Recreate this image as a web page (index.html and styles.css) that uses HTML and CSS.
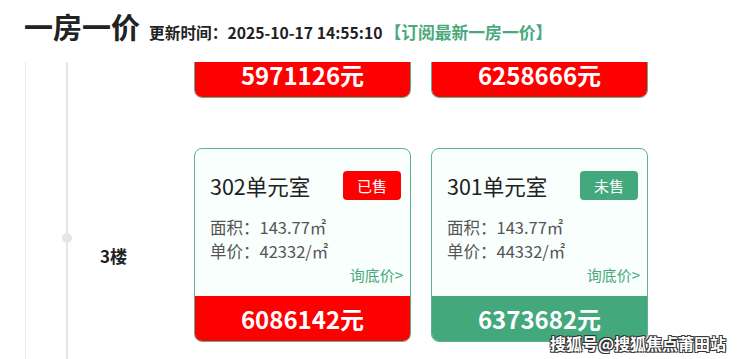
FILE: index.html
```html
<!DOCTYPE html>
<html>
<head>
  <meta charset="utf-8">
  <title>一房一价</title>
  <link rel="stylesheet" href="styles.css">
</head>
<body>
  <div class="head">
    <h1>一房一价</h1>
    <span class="time">更新时间：2025-10-17 14:55:10</span>
    <a class="sub" href="javascript:;">【订阅最新一房一价】</a>
  </div>
  <div class="view">
    <div class="floors">
      <div class="floor">
        <div class="side">
          <i class="dot"></i>
          <b class="label">4楼</b>
        </div>
        <div class="card">
          <div class="top">
            <span class="room">402单元室</span>
            <span class="tag sold">已售</span>
          </div>
          <p class="info">面积：143.77㎡</p>
          <p class="info">单价：41532/㎡</p>
          <a class="ask" href="javascript:;">询底价&gt;</a>
          <div class="price sold">5971126元</div>
        </div>
        <div class="card">
          <div class="top">
            <span class="room">401单元室</span>
            <span class="tag sold">已售</span>
          </div>
          <p class="info">面积：143.77㎡</p>
          <p class="info">单价：43532/㎡</p>
          <a class="ask" href="javascript:;">询底价&gt;</a>
          <div class="price sold">6258666元</div>
        </div>
      </div>
      <div class="floor">
        <div class="side">
          <i class="dot"></i>
          <b class="label">3楼</b>
        </div>
        <div class="card">
          <div class="top">
            <span class="room">302单元室</span>
            <span class="tag sold">已售</span>
          </div>
          <p class="info">面积：143.77㎡</p>
          <p class="info">单价：42332/㎡</p>
          <a class="ask" href="javascript:;">询底价&gt;</a>
          <div class="price sold">6086142元</div>
        </div>
        <div class="card">
          <div class="top">
            <span class="room">301单元室</span>
            <span class="tag">未售</span>
          </div>
          <p class="info">面积：143.77㎡</p>
          <p class="info">单价：44332/㎡</p>
          <a class="ask" href="javascript:;">询底价&gt;</a>
          <div class="price">6373682元</div>
        </div>
      </div>
    </div>
    <div class="mark">搜狐号@搜狐焦点莆田站</div>
  </div>
</body>
</html>
```
FILE: styles.css
```css
body{
  margin:0;
  font-family:"Noto Sans CJK SC","Noto Sans",sans-serif;
  color:#222;
  background:#fff;
}
a{
  text-decoration:none;
}
.head{
  height:62px;
  padding-left:24px;
  display:flex;
  align-items:baseline;
  box-sizing:border-box;
  padding-top:5px;
}
.head h1{
  margin:0;
  font-size:29px;
  font-weight:bold;
  line-height:42px;
}
.time{
  margin-left:9px;
  font-size:15.7px;
  font-weight:bold;
}
.sub{
  margin-left:2px;
  font-size:16.8px;
  font-weight:bold;
  color:#4aa97e;
}
.view{
  position:relative;
  height:297px;
  overflow:hidden;
}
.floors{
  margin-top:-158px;
  background:
    linear-gradient(#ebebeb,#ebebeb) 25px 0/1px 100% no-repeat,
    linear-gradient(#e6e6e6,#e6e6e6) 66px 0/2px 100% no-repeat;
}
.floor{
  display:flex;
  padding-bottom:50px;
}
.side{
  width:194px;
  padding-top:85px;
  display:flex;
  flex-direction:column;
  align-items:flex-start;
}
.dot{
  width:10px;
  height:10px;
  margin-left:62px;
  border-radius:5px;
  background:#e6e6e6;
}
.label{
  margin:1px 0 0 100px;
  font-size:17px;
  line-height:24px;
}
.card{
  width:217px;
  height:194px;
  margin-right:20px;
  box-sizing:border-box;
  border:1px solid #5cb38d;
  border-radius:8px;
  background:#f9fffd;
  overflow:hidden;
  display:flex;
  flex-direction:column;
}
.top{
  display:flex;
  justify-content:space-between;
  align-items:center;
  padding:22px 9px 0 15px;
}
.room{
  font-size:21.5px;
  line-height:29px;
  color:#222;
}
.tag{
  width:58px;
  height:29px;
  line-height:29px;
  border-radius:4px;
  text-align:center;
  font-size:15px;
  color:#fff;
  background:#43a87c;
}
.tag.sold{
  background:#ff0000;
}
.info{
  margin:0;
  padding-left:15px;
  font-size:16.5px;
  line-height:24px;
  color:#555;
}
.top + .info{
  margin-top:15px;
}
.ask{
  align-self:flex-end;
  margin-right:7px;
  font-size:15px;
  line-height:24px;
  color:#4aa97e;
}
.price{
  margin-top:auto;
  height:45px;
  line-height:45px;
  text-align:center;
  font-size:24px;
  font-weight:bold;
  color:#fff;
  background:#43a87c;
}
.price.sold{
  background:#ff0000;
}
.mark{
  position:absolute;
  right:14px;
  bottom:4px;
  font-size:16px;
  font-weight:bold;
  color:#fff;
  text-shadow:1px 1px 0 #333,-1px -1px 0 #333,1px -1px 0 #333,-1px 1px 0 #333;
}
```
